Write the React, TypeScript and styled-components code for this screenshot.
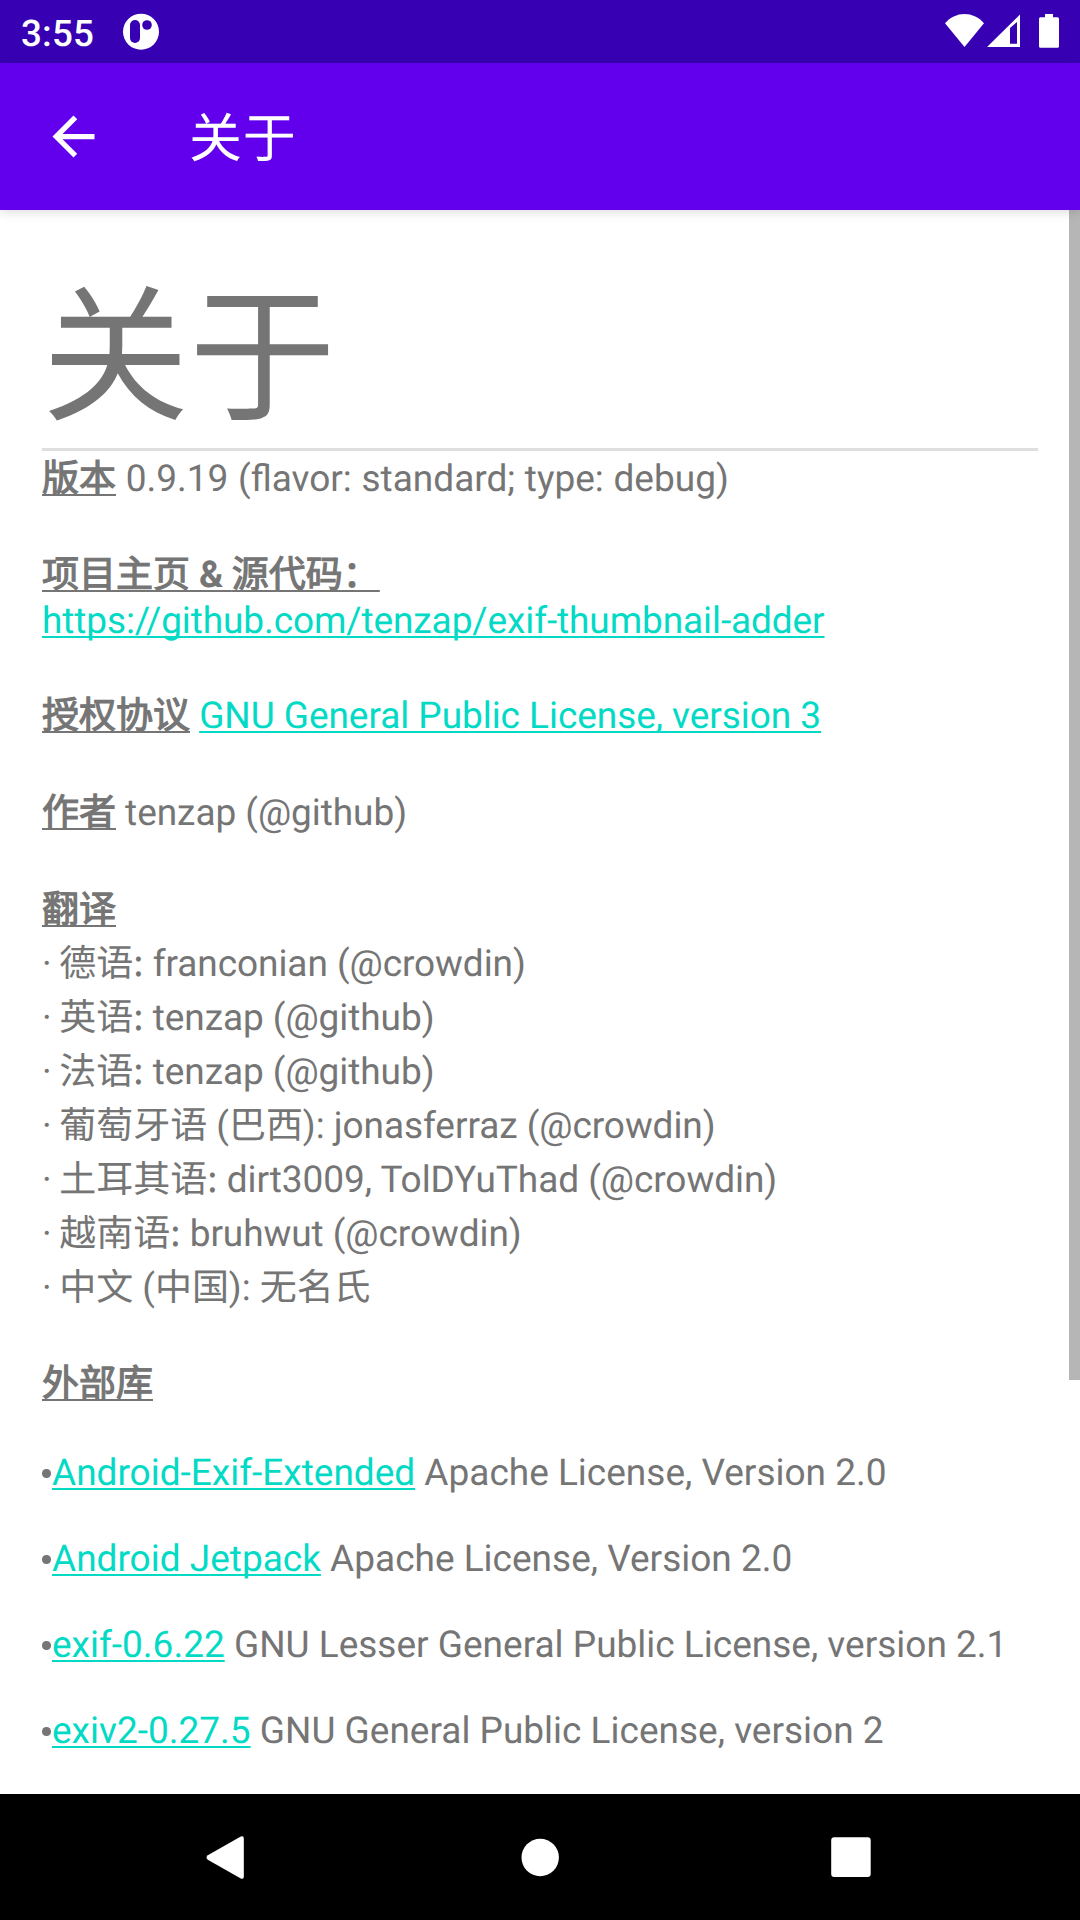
import React from "react";
import styled, { createGlobalStyle } from "styled-components";

const GlobalStyle = createGlobalStyle`
  html, body { margin: 0; padding: 0; background: #fff; }
  body {
    font-family: Roboto, "Noto Sans CJK SC", sans-serif;
    text-rendering: geometricPrecision;
    overflow: hidden;
  }
  * { box-sizing: border-box; }
`;

const Screen = styled.div`
  width: 1080px;
  height: 1920px;
  display: flex;
  flex-direction: column;
  background: #fff;
  color: #757575;
`;

const StatusBar = styled.header`
  height: 63px;
  flex: none;
  display: flex;
  align-items: flex-start;
  justify-content: space-between;
  padding: 0 21px 0 21px;
  background: #3700b3;
  color: #fff;
`;

const StatusStart = styled.div`
  display: flex;
  align-items: flex-start;
`;

const StatusEnd = styled.div`
  display: flex;
  align-items: flex-start;
  padding-top: 14px;
`;

const Clock = styled.span`
  width: 101px;
  font-size: 36.75px;
  font-weight: 500;
  line-height: 67px;
  letter-spacing: 0.2px;
`;

const NotificationIcon = styled.svg`
  display: block;
  margin-top: 13px;
`;

const StatusIcon = styled.svg<{ $gap?: number }>`
  display: block;
  margin-left: ${(p) => p.$gap ?? 0}px;
`;

const AppBar = styled.div`
  height: 147px;
  flex: none;
  display: flex;
  align-items: center;
  padding-left: 42px;
  gap: 84px;
  background: #6200ee;
  color: #fff;
  box-shadow: 0 2px 10px rgba(0, 0, 0, 0.14);
  z-index: 1;
`;

const AppBarTitle = styled.h1`
  margin: 4px 0 0;
  font-size: 53px;
  font-weight: 400;
  line-height: 72px;
  letter-spacing: 0.7px;
`;

const Viewport = styled.main`
  flex: 1;
  min-height: 0;
  display: flex;
  overflow: hidden;
`;

const Article = styled.article`
  flex: 1;
  padding: 42px 31px 0 42px;
  font-size: 37px;
`;

const Heading = styled.h2`
  margin: 0;
  height: 199px;
  font-size: 147px;
  font-weight: 400;
  line-height: 214px;
  border-bottom: 3px solid #dedede;
`;

const Line = styled.p<{ $top?: number; $wordGap?: number }>`
  margin: ${(p) => p.$top ?? 0}px 0 0;
  line-height: 44px;
  height: 44px;
  white-space: pre;
  word-spacing: ${(p) => p.$wordGap ?? 0}px;
`;

const Label = styled.span`
  font-weight: 400;
  text-decoration: underline;
  text-decoration-thickness: 2px;
  text-decoration-skip-ink: none;
  text-underline-offset: 3px;
`;

const Strong = styled.span`
  -webkit-text-stroke: 1.15px #757575;
`;

const Bold = styled.b`
  font-weight: 700;
  letter-spacing: -0.3px;
`;

const Link = styled.a<{ $tracking?: number }>`
  color: #03dac5;
  letter-spacing: ${(p) => p.$tracking ?? 0}px;
  text-decoration: underline;
  text-decoration-thickness: 2px;
  text-decoration-skip-ink: none;
  text-underline-offset: 3px;
`;

const Translators = styled.ul`
  margin: 5px 0 0;
  padding: 0;
  list-style: none;
`;

const Translator = styled.li`
  line-height: 54px;
  height: 54px;
  white-space: pre;
`;

const Dot = styled.span`
  letter-spacing: -0.8px;
`;

const People = styled.span`
  letter-spacing: -0.06px;
`;

const CjkText = styled.span`
  font-family: "Noto Sans CJK SC", sans-serif;
  line-height: 0;
`;

const Libraries = styled.ul`
  margin: 45px 0 0;
  padding: 0;
  list-style: none;
`;

const Library = styled.li`
  display: flex;
  align-items: center;
  height: 44px;
  margin-bottom: 42px;
  line-height: 44px;
  white-space: pre;

  &::before {
    content: "";
    width: 8.5px;
    height: 8.5px;
    margin: 0 1.5px 1px 0;
    border-radius: 50%;
    background: #757575;
  }
`;

const ScrollThumb = styled.div`
  width: 11px;
  height: 1170px;
  background: #b6b6b6;
`;

const NavBar = styled.nav`
  height: 126px;
  flex: none;
  display: flex;
  align-items: center;
  justify-content: space-between;
  padding: 0 197px;
  background: #000;
`;

const translators = [
  { language: "德语:", people: " franconian (@crowdin)" },
  { language: "英语:", people: " tenzap (@github)" },
  { language: "法语:", people: " tenzap (@github)" },
  { language: "葡萄牙语", people: " (巴西): jonasferraz (@crowdin)" },
  { language: "土耳其语:", people: " dirt3009, TolDYuThad (@crowdin)" },
  { language: "越南语:", people: " bruhwut (@crowdin)" },
  { language: "中文", people: " (中国): 无名氏" },
];

const libraries = [
  { name: "Android-Exif-Extended", license: "Apache License, Version 2.0" },
  { name: "Android Jetpack", license: "Apache License, Version 2.0" },
  { name: "exif-0.6.22", license: "GNU Lesser General Public License, version 2.1" },
  { name: "exiv2-0.27.5", license: "GNU General Public License, version 2" },
];

export default function App() {
  return (
    <Screen>
      <GlobalStyle />
      <StatusBar>
        <StatusStart>
          <Clock>3:55</Clock>
          <NotificationIcon width="38" height="38" viewBox="0 0 38 38">
            <circle cx="19" cy="18.7" r="18" fill="#fff" />
            <rect x="8" y="7" width="10" height="23" rx="5" fill="#3700b3" />
            <circle cx="25" cy="12" r="4.8" fill="#3700b3" />
          </NotificationIcon>
        </StatusStart>
        <StatusEnd>
          <StatusIcon width="39" height="33" viewBox="0 0 39 33" fill="#fff">
            <path d="M19.5 33 0 9.3C5 3.5 12 .1 19.5 .1S34 3.5 39 9.3Z" />
          </StatusIcon>
          <StatusIcon $gap={3} width="33" height="33" viewBox="0 0 33 33" fill="#fff">
            <path fillRule="evenodd" d="M0 33 33 .5V33ZM23 14V29.800H30V8Z" />
          </StatusIcon>
          <StatusIcon $gap={19} width="20" height="34" viewBox="0 0 20 34" fill="#fff">
            <path d="M6 0H14V3.300H18.500Q20 3.300 20 4.800V32.200Q20 33.700 18.500 33.700H1.500Q0 33.700 0 32.200V4.800Q0 3.300 1.500 3.300H6Z" />
          </StatusIcon>
        </StatusEnd>
      </StatusBar>

      <AppBar>
        <svg width="63" height="63" viewBox="0 0 24 24" fill="#fff">
          <path d="M20 11H7.830l5.590-5.590L12 4l-8 8 8 8 1.410-1.410L7.830 13H20v-2z" />
        </svg>
        <AppBarTitle>关于</AppBarTitle>
      </AppBar>

      <Viewport>
        <Article>
          <Heading>关于</Heading>
          <Line $top={7} $wordGap={0.5}>
            <Label><Strong>版本</Strong></Label> 0.9.19 (flavor: standard; type: debug)
          </Line>
          <Line $top={52}>
            <Label><Strong>项目主页</Strong><Bold> &amp; </Bold><Strong>源代码：</Strong></Label>
          </Line>
          <Line $top={2}>
            <Link $tracking={-0.095}>https://github.com/tenzap/exif-thumbnail-adder</Link>
          </Line>
          <Line $top={51}>
            <Label><Strong>授权协议</Strong></Label> <Link $tracking={-0.05}>GNU General Public License, version 3</Link>
          </Line>
          <Line $top={53}>
            <Label><Strong>作者</Strong></Label><People> tenzap (@github)</People>
          </Line>
          <Line $top={53}>
            <Label><Strong>翻译</Strong></Label>
          </Line>
          <Translators>
            {translators.map((t) => (
              <Translator key={t.language}>
                <Dot>· </Dot>
                <CjkText>{t.language}</CjkText>
                <People>{t.people}</People>
              </Translator>
            ))}
          </Translators>
          <Line $top={47}>
            <Label><Strong>外部库</Strong></Label>
          </Line>
          <Libraries>
            {libraries.map((l) => (
              <Library key={l.name}>
                <Link>{l.name}</Link>
                <span> {l.license}</span>
              </Library>
            ))}
          </Libraries>
        </Article>
        <ScrollThumb />
      </Viewport>

      <NavBar>
        <svg width="63" height="63" viewBox="0 0 63 63" fill="#fff">
          <path d="M43.800 10.600 10.800 29.300Q8.200 31.500 10.800 33.700L43.800 52.400Q46.800 53.600 46.800 50.500V12.500Q46.800 9.400 43.800 10.600Z" />
        </svg>
        <svg width="63" height="63" viewBox="0 0 63 63" fill="#fff">
          <circle cx="31.200" cy="31.500" r="18.700" />
        </svg>
        <svg width="63" height="63" viewBox="0 0 63 63" fill="#fff">
          <rect x="11.200" y="11.200" width="39.500" height="39.800" rx="3" />
        </svg>
      </NavBar>
    </Screen>
  );
}
